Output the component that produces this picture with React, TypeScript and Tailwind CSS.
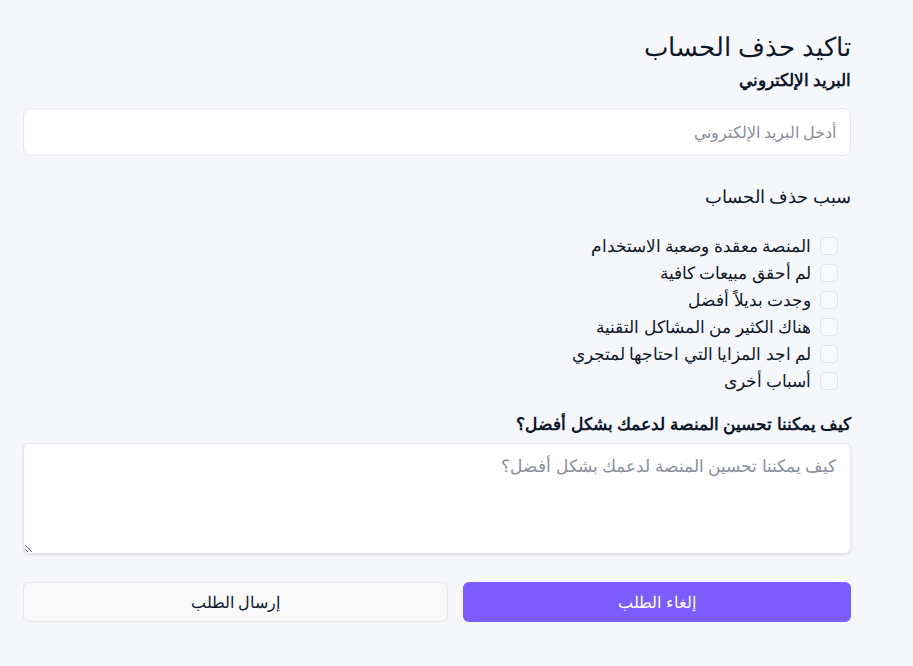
import { useState } from "react";

const reasons = [
    "المنصة معقدة وصعبة الاستخدام",
    "لم أحقق مبيعات كافية",
    "وجدت بديلاً أفضل",
    "هناك الكثير من المشاكل التقنية",
    "لم اجد المزايا التي احتاجها لمتجري",
    "أسباب أخرى",
];

export default function App() {
    const [checked, setChecked] = useState<string[]>([]);

    const toggle = (r: string) =>
        setChecked((prev) => (prev.includes(r) ? prev.filter((x) => x !== r) : [...prev, r]));

    return (
        <div
            dir="rtl"
            className="min-h-[666px] w-full bg-[#f6f7fb] text-[#111827] font-['Noto_Sans',sans-serif]"
        >
            <div className="w-[828px] mr-[62px] pt-[28px] flex flex-col">
                <h1 className="text-[26px] leading-[36px] font-normal text-[#0f172a]">تاكيد حذف الحساب</h1>
                <label className="mt-[4px] text-[16.5px] leading-[24px] font-semibold text-[#0f172a]">البريد الإلكتروني</label>

                <input
                    type="email"
                    placeholder="أدخل البريد الإلكتروني"
                    className="mt-[16px] h-[48px] w-full rounded-lg border border-[#e5e7eb] bg-white px-[14px] text-[16px] placeholder:text-[#8b8f98] outline-none"
                />

                <h2 className="mt-[26px] text-[18px] leading-[28px] font-normal text-[#0f172a]">سبب حذف الحساب</h2>

                <div className="mt-[22px] flex flex-col">
                    {reasons.map((r) => (
                        <label key={r} className="flex items-center gap-[9px] h-[27px] pr-[13px] cursor-pointer">
                            <span
                                onClick={() => toggle(r)}
                                className={
                                    checked.includes(r)
                                        ? "w-[18px] h-[18px] rounded-[5px] border border-[#7c5cfc] bg-[#7c5cfc]"
                                        : "w-[18px] h-[18px] rounded-[5px] border border-[#e3e5ea] bg-[#f9fafb]"
                                }
                            />
                            <span className="text-[17px] leading-[24px]">{r}</span>
                        </label>
                    ))}
                </div>

                <label className="mt-[17px] text-[17px] leading-[26px] font-semibold text-[#0f172a]">
                    كيف يمكننا تحسين المنصة لدعمك بشكل أفضل؟
                </label>
                <textarea
                    placeholder="كيف يمكننا تحسين المنصة لدعمك بشكل أفضل؟"
                    className="mt-[6px] h-[111px] w-full rounded-md border border-[#e5e7eb] bg-white px-[14px] py-[9px] text-[17px] leading-[26px] placeholder:text-[#8b8f98] outline-none shadow-sm"
                />

                <div className="mt-[28px] flex gap-[15px]">
                    <button className="w-[388px] h-[40px] rounded-md bg-[#7c5cfc] text-white text-[16px] font-normal">
                        إلغاء الطلب
                    </button>
                    <button className="flex-1 h-[40px] rounded-md border border-[#e5e7eb] bg-[#f9f9fa] text-[16px] font-normal text-[#0f172a]">
                        إرسال الطلب
                    </button>
                </div>
            </div>
        </div>
    );
}
